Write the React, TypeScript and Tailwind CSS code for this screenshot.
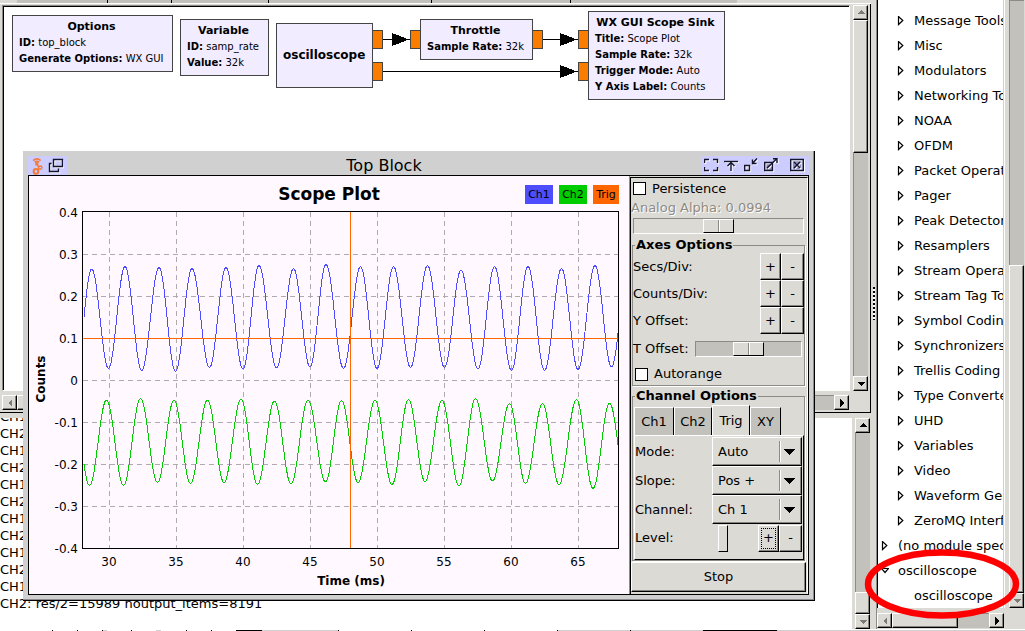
import React from "react";

const bevel =
  "border border-t-white border-l-white border-r-black border-b-black bg-[#dcdad5] shadow-[inset_-1px_-1px_0_#86847e]";

type Dir = "up" | "down" | "left" | "right";

const arrowPoints: Record<Dir, string> = {
  up: "0,5 4,1 8,5",
  down: "0,2 8,2 4,6",
  left: "6,0 2,4 6,8",
  right: "2,0 6,4 2,8",
};

function ScrollButton({ dir, dim = false }: { dir: Dir; dim?: boolean }) {
  return (
    <button
      type="button"
      aria-label={`Scroll ${dir}`}
      className={`flex h-[15px] w-[15px] shrink-0 items-center justify-center ${bevel}`}
    >
      <svg width="8" height="8" viewBox="0 0 8 8" shapeRendering="crispEdges">
        <polygon points={arrowPoints[dir]} fill={dim ? "#7d7b76" : "#000"} />
      </svg>
    </button>
  );
}

interface ScrollbarProps {
  vertical?: boolean;
  before: number;
  thumb: number;
  after: number;
  startDim?: boolean;
  endDim?: boolean;
  noStart?: boolean;
}

function Scrollbar({ vertical = false, before, thumb, after, startDim, endDim, noStart }: ScrollbarProps) {
  return (
    <div
      className={`flex shrink-0 bg-[#c3c1bb] shadow-[inset_1px_1px_0_#8d8b85] ${
        vertical ? "w-[15px] flex-col" : "h-[15px] flex-row"
      }`}
    >
      {!noStart && <ScrollButton dir={vertical ? "up" : "left"} dim={startDim} />}
      <div style={{ flex: `${before} 1 0px` }} />
      <div className={bevel} style={{ flex: `${thumb} 1 0px` }} />
      <div style={{ flex: `${after} 1 0px` }} />
      <ScrollButton dir={vertical ? "down" : "right"} dim={endDim} />
    </div>
  );
}

/* ---------- Flow graph ---------- */

interface BlockProps {
  title: string;
  params?: [string, string][];
  place: string;
}

function Block({ title, params = [], place }: BlockProps) {
  return (
    <div
      className={`absolute flex flex-col justify-center border border-[#444] bg-[#f1ecff] pr-2 pb-[2px] pl-1.5 text-[10px] leading-4 whitespace-nowrap ${place}`}
    >
      <div className={`text-center font-bold ${params.length ? "text-[11px]" : "text-[12px]"}`}>{title}</div>
      {params.map(([k, v]) => (
        <div key={k}>
          <b>{k}:</b> {v}
        </div>
      ))}
    </div>
  );
}

const ports: [number, number][] = [
  [368, 23],
  [368, 55],
  [406, 23],
  [528, 23],
  [574, 23],
  [574, 55],
];

function FlowGraph() {
  return (
    <div className="relative min-w-0 flex-1 overflow-hidden border border-t-[#8d8b85] border-r-white border-b-white border-l-[#8d8b85]">
      <div className="relative h-full overflow-hidden border-t border-l border-black bg-white">
        <svg className="absolute top-0 left-0" width="760" height="110" shapeRendering="crispEdges">
          <g fill="#fa7d00" stroke="#444">
            {ports.map(([x, y]) => (
              <rect key={`${x}-${y}`} x={x + 0.5} y={y + 0.5} width="10" height="18" />
            ))}
          </g>
          <g stroke="#000" strokeWidth="1">
            <path d="M379 32.5H406M539 32.5H574M379 64.5H574" />
          </g>
          <g fill="#000">
            <path d="M388 26L405 32.5L388 39ZM556 26L573 32.5L556 39ZM556 58L573 64.5L556 71Z" />
          </g>
        </svg>
        <Block
          place="left-2 top-2 h-[57px] w-[161px]"
          title="Options"
          params={[
            ["ID", "top_block"],
            ["Generate Options", "WX GUI"],
          ]}
        />
        <Block
          place="left-44 top-3 h-[57px] w-[89px]"
          title="Variable"
          params={[
            ["ID", "samp_rate"],
            ["Value", "32k"],
          ]}
        />
        <Block place="left-[272px] top-4 h-[65px] w-[97px]" title="oscilloscope" />
        <Block place="left-[416px] top-3 h-[41px] w-[113px]" title="Throttle" params={[["Sample Rate", "32k"]]} />
        <Block
          place="left-[584px] top-1 h-[89px] w-[137px]"
          title="WX GUI Scope Sink"
          params={[
            ["Title", "Scope Plot"],
            ["Sample Rate", "32k"],
            ["Trigger Mode", "Auto"],
            ["Y Axis Label", "Counts"],
          ]}
        />
      </div>
    </div>
  );
}

function TabStrip() {
  return (
    <div className="flex h-[4px] shrink-0 border-b border-white">
      <div className="w-[17px]" />
      {["w-[91px]", "w-[64px]", "w-[97px]", "w-[163px]", "w-[139px]"].map((w) => (
        <div key={w} className={`border-r border-black bg-[#c3c1bb] ${w}`} />
      ))}
      <div className="w-[166px] bg-[#c3c1bb]" />
    </div>
  );
}

/* ---------- Console ---------- */

const consoleLines = [
  "CH1:",
  "CH2:",
  "CH1:",
  "CH2:",
  "CH1:",
  "CH2:",
  "CH1:",
  "CH2:",
  "CH1:",
  "CH2:",
  "CH1:",
  "CH2: res/2=15989 noutput_items=8191",
];

function Console() {
  return (
    <div className="flex min-h-0 flex-1 gap-[3px] pt-[5px]">
      <div className="flex min-w-0 flex-1 flex-col justify-end overflow-hidden bg-white pb-[17px] leading-[17px]">
        {consoleLines.map((l, i) => (
          <div key={i} className="shrink-0 whitespace-nowrap">
            {l}
          </div>
        ))}
      </div>
      <div className="mr-[1px] flex">
        <Scrollbar vertical before={160} thumb={20} after={0} endDim />
      </div>
    </div>
  );
}

/* ---------- Block tree ---------- */

const categories = [
  "Message Tools",
  "Misc",
  "Modulators",
  "Networking Tools",
  "NOAA",
  "OFDM",
  "Packet Operators",
  "Pager",
  "Peak Detectors",
  "Resamplers",
  "Stream Operators",
  "Stream Tag Tools",
  "Symbol Coding",
  "Synchronizers",
  "Trellis Coding",
  "Type Converters",
  "UHD",
  "Variables",
  "Video",
  "Waveform Generators",
  "ZeroMQ Interfaces",
];

function Expander({ open = false }: { open?: boolean }) {
  return (
    <svg width="8" height="10" viewBox="0 0 8 10" className="shrink-0" fill="#fff" stroke="#000" strokeWidth="1.2">
      {open ? <path d="M0.5 2.5H7.5L4 6.5Z" /> : <path d="M1.5 0.5V8.5L5.8 4.5Z" />}
    </svg>
  );
}

function BlockTree() {
  return (
    <div className="flex min-h-0 flex-1 flex-col">
      <div className="flex min-h-0 flex-1">
        <ul className="min-w-0 flex-1 overflow-hidden border-l border-black bg-white pt-2">
          {categories.map((c) => (
            <li key={c} className="flex h-[25px] items-center gap-[9px] pl-[19px] whitespace-nowrap">
              <Expander />
              {c}
            </li>
          ))}
          <li className="flex h-[25px] items-center gap-[9px] pl-[3px] whitespace-nowrap">
            <Expander />
            (no module specified)
          </li>
          <li className="flex h-[25px] items-center gap-[9px] pl-[3px] whitespace-nowrap">
            <Expander open />
            oscilloscope
          </li>
          <li className="flex h-[25px] items-center pl-[36px] whitespace-nowrap">oscilloscope</li>
        </ul>
        <div className="mr-[4px] w-[2px] border-r border-white bg-[#d0d0d0]" />
        <Scrollbar vertical noStart before={266} thumb={328} after={0} endDim />
        <div className="w-[1px]" />
      </div>
      <div className="mt-[5px] mr-[21px] mb-[1px]">
        <Scrollbar before={0} thumb={67} after={32} startDim />
      </div>
    </div>
  );
}

/* ---------- Scope plot ---------- */

type Pt = [number, number];

const ch1: Pt[] = [
  [76, 369], [91.7, 269], [108.5, 368.5], [125, 266.5], [141.7, 370.5], [159, 267.5], [175.5, 371.5], [192, 268.5],
  [209.5, 367.5], [226, 267.5], [243, 369], [259, 265.5], [276.5, 368], [293.5, 268.5], [310, 367], [326, 264.5],
  [343.5, 368.5], [360.5, 266.5], [377, 368.5], [393.5, 266.5], [410.5, 367.5], [427.5, 265.5], [444.5, 367.5],
  [461, 270], [478, 369], [494.5, 266.5], [511.5, 370.5], [528, 266.5], [544.5, 370.5], [561.5, 268.5],
  [578, 369.5], [595, 265.5], [611.5, 367], [628, 267],
];

const ch2: Pt[] = [
  [73, 400], [89.5, 485.5], [106.5, 400], [123.5, 485.5], [140.5, 398.5], [157.5, 482.5], [174, 400], [190.5, 483.5],
  [207.5, 400], [224, 482.5], [241, 399], [257.5, 484.5], [274.5, 401], [291, 484], [308, 400], [325.5, 482],
  [341.5, 400.5], [358, 482.5], [375, 400.5], [392, 484.5], [408.5, 399.5], [425, 481.5], [442, 400.5],
  [459, 486], [475.5, 398.5], [492.5, 481], [509.5, 403.5], [525.5, 483.5], [542.5, 403.5], [559, 484.5],
  [576.5, 399.5], [593, 488.5], [609.5, 403], [626.5, 486],
];

/* Cosine interpolation between successive extremes of a trace. */
function trace(ext: Pt[]): string {
  const out: string[] = [];
  let k = 0;
  for (let x = 84; x <= 618; x++) {
    while (ext[k + 1][0] < x) k++;
    const [x0, y0] = ext[k];
    const [x1, y1] = ext[k + 1];
    const y = y0 + ((y1 - y0) * (1 - Math.cos((Math.PI * (x - x0)) / (x1 - x0)))) / 2;
    out.push(`${x},${y.toFixed(1)}`);
  }
  return out.join(" ");
}

const xTicks = [30, 35, 40, 45, 50, 55, 60, 65];
const yTicks = ["0.4", "0.3", "0.2", "0.1", "0", "-0.1", "-0.2", "-0.3", "-0.4"];
const legend = [
  { label: "Ch1", fill: "#4d4dff", x: 525, w: 28 },
  { label: "Ch2", fill: "#00cc00", x: 559, w: 28 },
  { label: "Trig", fill: "#ff6600", x: 593, w: 26 },
];

function ScopePlot() {
  return (
    <svg
      viewBox="29 176 600 418"
      className="block min-w-0 flex-1 bg-[#fff8ff]"
      role="img"
      aria-label="Scope Plot"
      fontFamily='"DejaVu Sans", sans-serif'
    >
      <text x="329" y="200" textAnchor="middle" fontSize="17" fontWeight="bold">
        Scope Plot
      </text>
      {legend.map((l) => (
        <g key={l.label}>
          <rect x={l.x} y="185" width={l.w} height="19" fill={l.fill} />
          <text x={l.x + l.w / 2} y="198" textAnchor="middle" fontSize="11">
            {l.label}
          </text>
        </g>
      ))}
      <g shapeRendering="crispEdges" fill="none">
        <g stroke="#b0aab0" strokeDasharray="5 4">
          {xTicks.map((t, i) => (
            <path key={t} d={`M${109.5 + i * 67} 212V548`} />
          ))}
          {yTicks.slice(1, 8).map((t, i) => (
            <path key={t} d={`M83 ${254.5 + i * 42}H618`} />
          ))}
        </g>
        <rect x="82.5" y="211.5" width="536" height="337" stroke="#000" />
        <polyline points={trace(ch1)} stroke="#4d4dff" />
        <polyline points={trace(ch2)} stroke="#00cc00" />
        <path d="M84 338.5H618M350.5 212V548" stroke="#ff6600" />
      </g>
      <g fontSize="12">
        {yTicks.map((t, i) => (
          <text key={t} x="78" y={217 + i * 42} textAnchor="end">
            {t}
          </text>
        ))}
        {xTicks.map((t, i) => (
          <text key={t} x={109 + i * 67} y="566" textAnchor="middle">
            {t}
          </text>
        ))}
      </g>
      <g fontSize="12" fontWeight="bold" textAnchor="middle">
        <text x="351" y="585">
          Time (ms)
        </text>
        <text transform="translate(45 379) rotate(-90)">Counts</text>
      </g>
    </svg>
  );
}

/* ---------- Control panel ---------- */

const sliderBase =
  "m-0 block h-[16px] cursor-default appearance-none border border-t-[#8d8b85] border-l-[#8d8b85] border-r-white border-b-white outline-none [&::-webkit-slider-thumb]:h-[14px] [&::-webkit-slider-thumb]:w-[31px] [&::-webkit-slider-thumb]:appearance-none [&::-webkit-slider-thumb]:border [&::-webkit-slider-thumb]:border-t-white [&::-webkit-slider-thumb]:border-l-white [&::-webkit-slider-thumb]:border-r-black [&::-webkit-slider-thumb]:border-b-black [&::-webkit-slider-thumb]:bg-[linear-gradient(90deg,#dcdad5_14px,#8d8b85_14px,#8d8b85_15px,#fff_15px,#fff_16px,#dcdad5_16px)]";

const checkClass = "m-0 h-[13px] w-[13px] shrink-0 appearance-none border border-black bg-white";

function Stepper({ name }: { name: string }) {
  return (
    <div className="flex h-[27px] items-center">
      <span className="flex-1">{name}:</span>
      <button type="button" aria-label={`Increase ${name}`} className={`h-full w-[21px] ${bevel}`}>
        +
      </button>
      <button type="button" aria-label={`Decrease ${name}`} className={`h-full w-[23px] ${bevel}`}>
        -
      </button>
    </div>
  );
}

function Choice({ id, name, options }: { id: string; name: string; options: string[] }) {
  return (
    <div className="flex h-[29px] items-center">
      <label htmlFor={id} className="flex-1">
        {name}:
      </label>
      <div className="relative h-full w-[90px]">
        <select id={id} className={`h-full w-full appearance-none pl-[5px] outline-none ${bevel}`}>
          {options.map((o) => (
            <option key={o}>{o}</option>
          ))}
        </select>
        <svg
          className="pointer-events-none absolute top-1 right-[6px]"
          width="18"
          height="21"
          viewBox="0 0 18 21"
          shapeRendering="crispEdges"
        >
          <path d="M1.5 0V21" stroke="#8d8b85" />
          <path d="M2.5 0V21" stroke="#fff" />
          <path d="M6 8H17L11.5 14Z" />
        </svg>
      </div>
    </div>
  );
}

const groupClass = "mr-[2px] ml-[1px] min-w-0 border border-[#8d8b85] shadow-[1px_1px_0_#fff]";
const legendClass = "ml-[2px] h-4 px-[1px] leading-4 font-bold";

const tabs = [
  { label: "Ch1", size: "w-[40px] h-7" },
  { label: "Ch2", size: "w-[38px] h-7" },
  { label: "Trig", size: "w-[38px] h-[30px]", active: true },
  { label: "XY", size: "w-[31px] h-7" },
];

function ControlPanel() {
  return (
    <div className="flex w-[179px] shrink-0 flex-col border-l border-[#8d8b85] bg-[#dcdad5] pt-[1px]">
      <div className="flex flex-1 flex-col border-t border-r border-l border-t-black border-r-white border-l-black">
        <label className="flex h-[21px] items-center gap-[6px] pl-[2px]">
          <input type="checkbox" className={checkClass} />
          Persistence
        </label>
        <label htmlFor="alpha" className="h-[19px] leading-[18px] text-[#8d8b85] [text-shadow:1px_1px_0_#fff]">
          Analog Alpha: 0.0994
        </label>
        <input
          id="alpha"
          type="range"
          disabled
          min="0"
          max="100"
          defaultValue="50"
          className={`mr-[3px] ml-[2px] bg-[#dcdad5] ${sliderBase}`}
        />
        <fieldset className={`mt-[3px] ${groupClass}`}>
          <legend className={legendClass}>Axes Options</legend>
          <Stepper name="Secs/Div" />
          <Stepper name="Counts/Div" />
          <Stepper name="Y Offset" />
          <div className="flex h-[29px] items-center pr-[2px]">
            <label htmlFor="toffset" className="flex-1">
              T Offset:
            </label>
            <input
              id="toffset"
              type="range"
              min="0"
              max="100"
              defaultValue="50"
              className={`w-[107px] bg-[#c3c1bb] ${sliderBase}`}
            />
          </div>
          <label className="flex h-[22px] items-center gap-[6px] pl-[2px]">
            <input type="checkbox" className={checkClass} />
            Autorange
          </label>
        </fieldset>
        <fieldset className={`mt-[2px] ${groupClass}`}>
          <legend className={legendClass}>Channel Options</legend>
          <div role="tablist" className="mt-[1px] flex items-end pl-[1px]">
            {tabs.map((t) => (
              <button
                key={t.label}
                type="button"
                role="tab"
                aria-selected={!!t.active}
                className={`border-t border-r border-l border-t-white border-r-black border-l-white ${
                  t.active ? "bg-[#dcdad5]" : "bg-[#c3c1bb]"
                } ${t.size}`}
              >
                {t.label}
              </button>
            ))}
          </div>
          <div className="ml-[1px] border border-t-white border-r-black border-b-black border-l-white pt-[1px] pr-[1px] pb-[7px]">
            <Choice id="mode" name="Mode" options={["Auto", "Normal", "Free Run"]} />
            <Choice id="slope" name="Slope" options={["Pos +", "Neg -"]} />
            <Choice id="channel" name="Channel" options={["Ch 1", "Ch 2"]} />
            <div className="flex h-[28px] items-center">
              <label htmlFor="level" className="w-[83px]">
                Level:
              </label>
              <input
                id="level"
                type="range"
                defaultValue="0"
                className="m-0 h-[27px] w-[40px] appearance-none bg-transparent outline-none [&::-webkit-slider-thumb]:h-[27px] [&::-webkit-slider-thumb]:w-[10px] [&::-webkit-slider-thumb]:appearance-none [&::-webkit-slider-thumb]:border [&::-webkit-slider-thumb]:border-t-white [&::-webkit-slider-thumb]:border-r-black [&::-webkit-slider-thumb]:border-b-black [&::-webkit-slider-thumb]:border-l-white [&::-webkit-slider-thumb]:bg-[#dcdad5]"
              />
              <button
                type="button"
                aria-label="Increase level"
                className={`ml-auto flex h-[27px] w-[21px] items-center justify-center ${bevel}`}
              >
                <span className="flex h-[21px] w-[15px] items-center justify-center border border-dotted border-black">
                  +
                </span>
              </button>
              <button type="button" aria-label="Decrease level" className={`h-[27px] w-[23px] ${bevel}`}>
                -
              </button>
            </div>
          </div>
        </fieldset>
        <button type="button" className={`mt-[1px] mr-[1px] mb-[2px] flex-1 ${bevel}`}>
          Stop
        </button>
      </div>
    </div>
  );
}

/* ---------- Scope window ---------- */

function TitleIcon({ label, fill, children }: { label: string; fill?: string; children: React.ReactNode }) {
  return (
    <button type="button" aria-label={label} className="h-[15px] w-[15px] shrink-0">
      <svg width="15" height="15" viewBox="0 0 15 15" fill="none" strokeWidth="1.4">
        {fill && <path d={fill} fill="#8a8abc" />}
        <g stroke="#fff" transform="translate(1 1)">
          {children}
        </g>
        <g stroke="#14142c">{children}</g>
      </svg>
    </button>
  );
}

function ScopeWindow() {
  return (
    <div className="absolute top-[151px] left-[23px] flex h-[450px] w-[792px] flex-col border-r border-b border-black bg-[#d0d0d0] pt-[5px] pr-[5px] pb-[5px] pl-[5px] shadow-[inset_-1px_-1px_0_#8d8b8d]">
      <div className="flex h-[19px] shrink-0 items-center">
        <div className="flex h-full items-center gap-[2px] bg-[#ccccff] pr-[3px] pl-[3px]">
          <svg width="15" height="18" viewBox="0 0 15 18" fill="none" stroke="#f47a3c" strokeWidth="1.5">
            <path d="M2.2 3.6Q6 0.2 9.6 3.6M3.8 5.4Q6 3.6 8 5.4" strokeWidth="1.7" />
            <circle cx="5.8" cy="7" r="1" />
            <path d="M6.4 8.4L8 10" />
            <circle cx="9.2" cy="10.6" r="1.7" />
            <circle cx="5" cy="14.4" r="2.3" strokeWidth="2" />
            <path d="M6.8 13L8 12" />
          </svg>
          <button type="button" aria-label="Window menu" className="h-[16px] w-[16px]">
            <svg width="16" height="16" viewBox="0 0 16 16" fill="none" strokeWidth="1.4">
              <g stroke="#fff" transform="translate(1 1)">
                <path d="M5.5 1.5H14.5V8.5H5.5ZM3.5 5.5H1.5V13.5H10.5V10.5" />
              </g>
              <path d="M5.5 1.5H14.5V8.5H5.5ZM3.5 5.5H1.5V13.5H10.5V10.5" stroke="#14142c" />
            </svg>
          </button>
        </div>
        <div className="flex-1 text-center text-base leading-[19px]">Top Block</div>
        <div className="flex h-full items-center gap-[5px] bg-[#ccccff] pr-[4px] pl-[3px]">
          <TitleIcon label="Full screen">
            <path d="M0.5 5V1.5H5M9 1.5H13.5V5M13.5 9V12.5H9M5 12.5H0.5V9" />
          </TitleIcon>
          <TitleIcon label="Shade">
            <path d="M0 3.5H14" />
            <path d="M7 4V13M3.5 8L7 4.5L10.5 8" />
          </TitleIcon>
          <TitleIcon label="Minimize">
            <path d="M0.7 7.5H5.5V12.5H0.7Z" />
            <path d="M8.5 1.5V5.5H12.5M8.5 5.5L13 0.5" />
          </TitleIcon>
          <TitleIcon label="Maximize" fill="M1 4H9V12H1Z">
            <path d="M0.7 4.5H8.5V12.5H0.7Z" />
            <path d="M3 10L12.5 1M9 0.7H13V5" />
          </TitleIcon>
          <div className="ml-[6px] flex">
            <TitleIcon label="Close" fill="M3 3H11V11H3Z">
              <path d="M0.7 1.5H13.3V12.5H0.7Z" />
              <path d="M4 4L10 10M10 4L4 10" />
            </TitleIcon>
          </div>
        </div>
      </div>
      <div className="flex min-h-0 flex-1 border border-black">
        <ScopePlot />
        <ControlPanel />
      </div>
    </div>
  );
}

/* ---------- Bottom edge ---------- */

const edge: [number, number, string][] = [
  [0, 52, "#fff"], [52, 1, "#000"], [77, 1, "#000"], [102, 1, "#000"], [103, 4, "#d0d0d0"], [131, 1, "#000"],
  [156, 5, "#d0d0d0"], [186, 1, "#000"], [211, 1, "#000"], [236, 26, "#000"], [262, 76, "#d0d0d0"],
  [338, 1, "#000"], [411, 1, "#000"], [484, 1, "#000"], [557, 1, "#000"], [558, 72, "#d0d0d0"], [630, 1, "#000"],
  [631, 72, "#d0d0d0"], [703, 74, "#000"], [777, 248, "#d0d0d0"],
];

export default function App() {
  return (
    <div className="relative flex h-screen flex-col overflow-hidden bg-[#dcdad5] font-['DejaVu_Sans',sans-serif] text-[13px] text-black">
      <main className="flex min-h-0 flex-1">
        <section className="flex min-w-0 flex-1 flex-col">
          <div className="flex h-[413px] shrink-0 flex-col">
            <TabStrip />
            <div className="flex min-h-0 flex-1 flex-col border-r border-b border-black pt-[1px] pr-[2px] pb-[2px] pl-[2px]">
              <div className="flex min-h-0 flex-1 gap-[3px]">
                <FlowGraph />
                <Scrollbar vertical before={0} thumb={132} after={224} startDim />
              </div>
              <div className="mt-[4px] mr-[19px]">
                <Scrollbar before={0} thumb={700} after={117} startDim />
              </div>
            </div>
          </div>
          <Console />
        </section>
        <div className="flex w-[6px] flex-col items-center justify-center border-r border-[#8d8b85] pb-[23px]">
          <div className="h-[33px] w-[2px] bg-[repeating-linear-gradient(180deg,#000_0px,#000_2px,#fff_2px,#fff_4px)]" />
        </div>
        <aside className="flex w-[148px] shrink-0 flex-col">
          <BlockTree />
        </aside>
      </main>
      <svg className="h-[2px] w-full shrink-0 bg-white" shapeRendering="crispEdges">
        {edge.map(([x, w, c]) => (
          <rect key={x} x={x} y="1" width={w} height="1" fill={c} />
        ))}
      </svg>
      <ScopeWindow />
      <svg className="pointer-events-none absolute right-[4px] bottom-[11px]" width="158" height="72" fill="none">
        <ellipse cx="79" cy="36" rx="74" ry="31.5" stroke="#ff0000" strokeWidth="6.5" />
      </svg>
    </div>
  );
}
